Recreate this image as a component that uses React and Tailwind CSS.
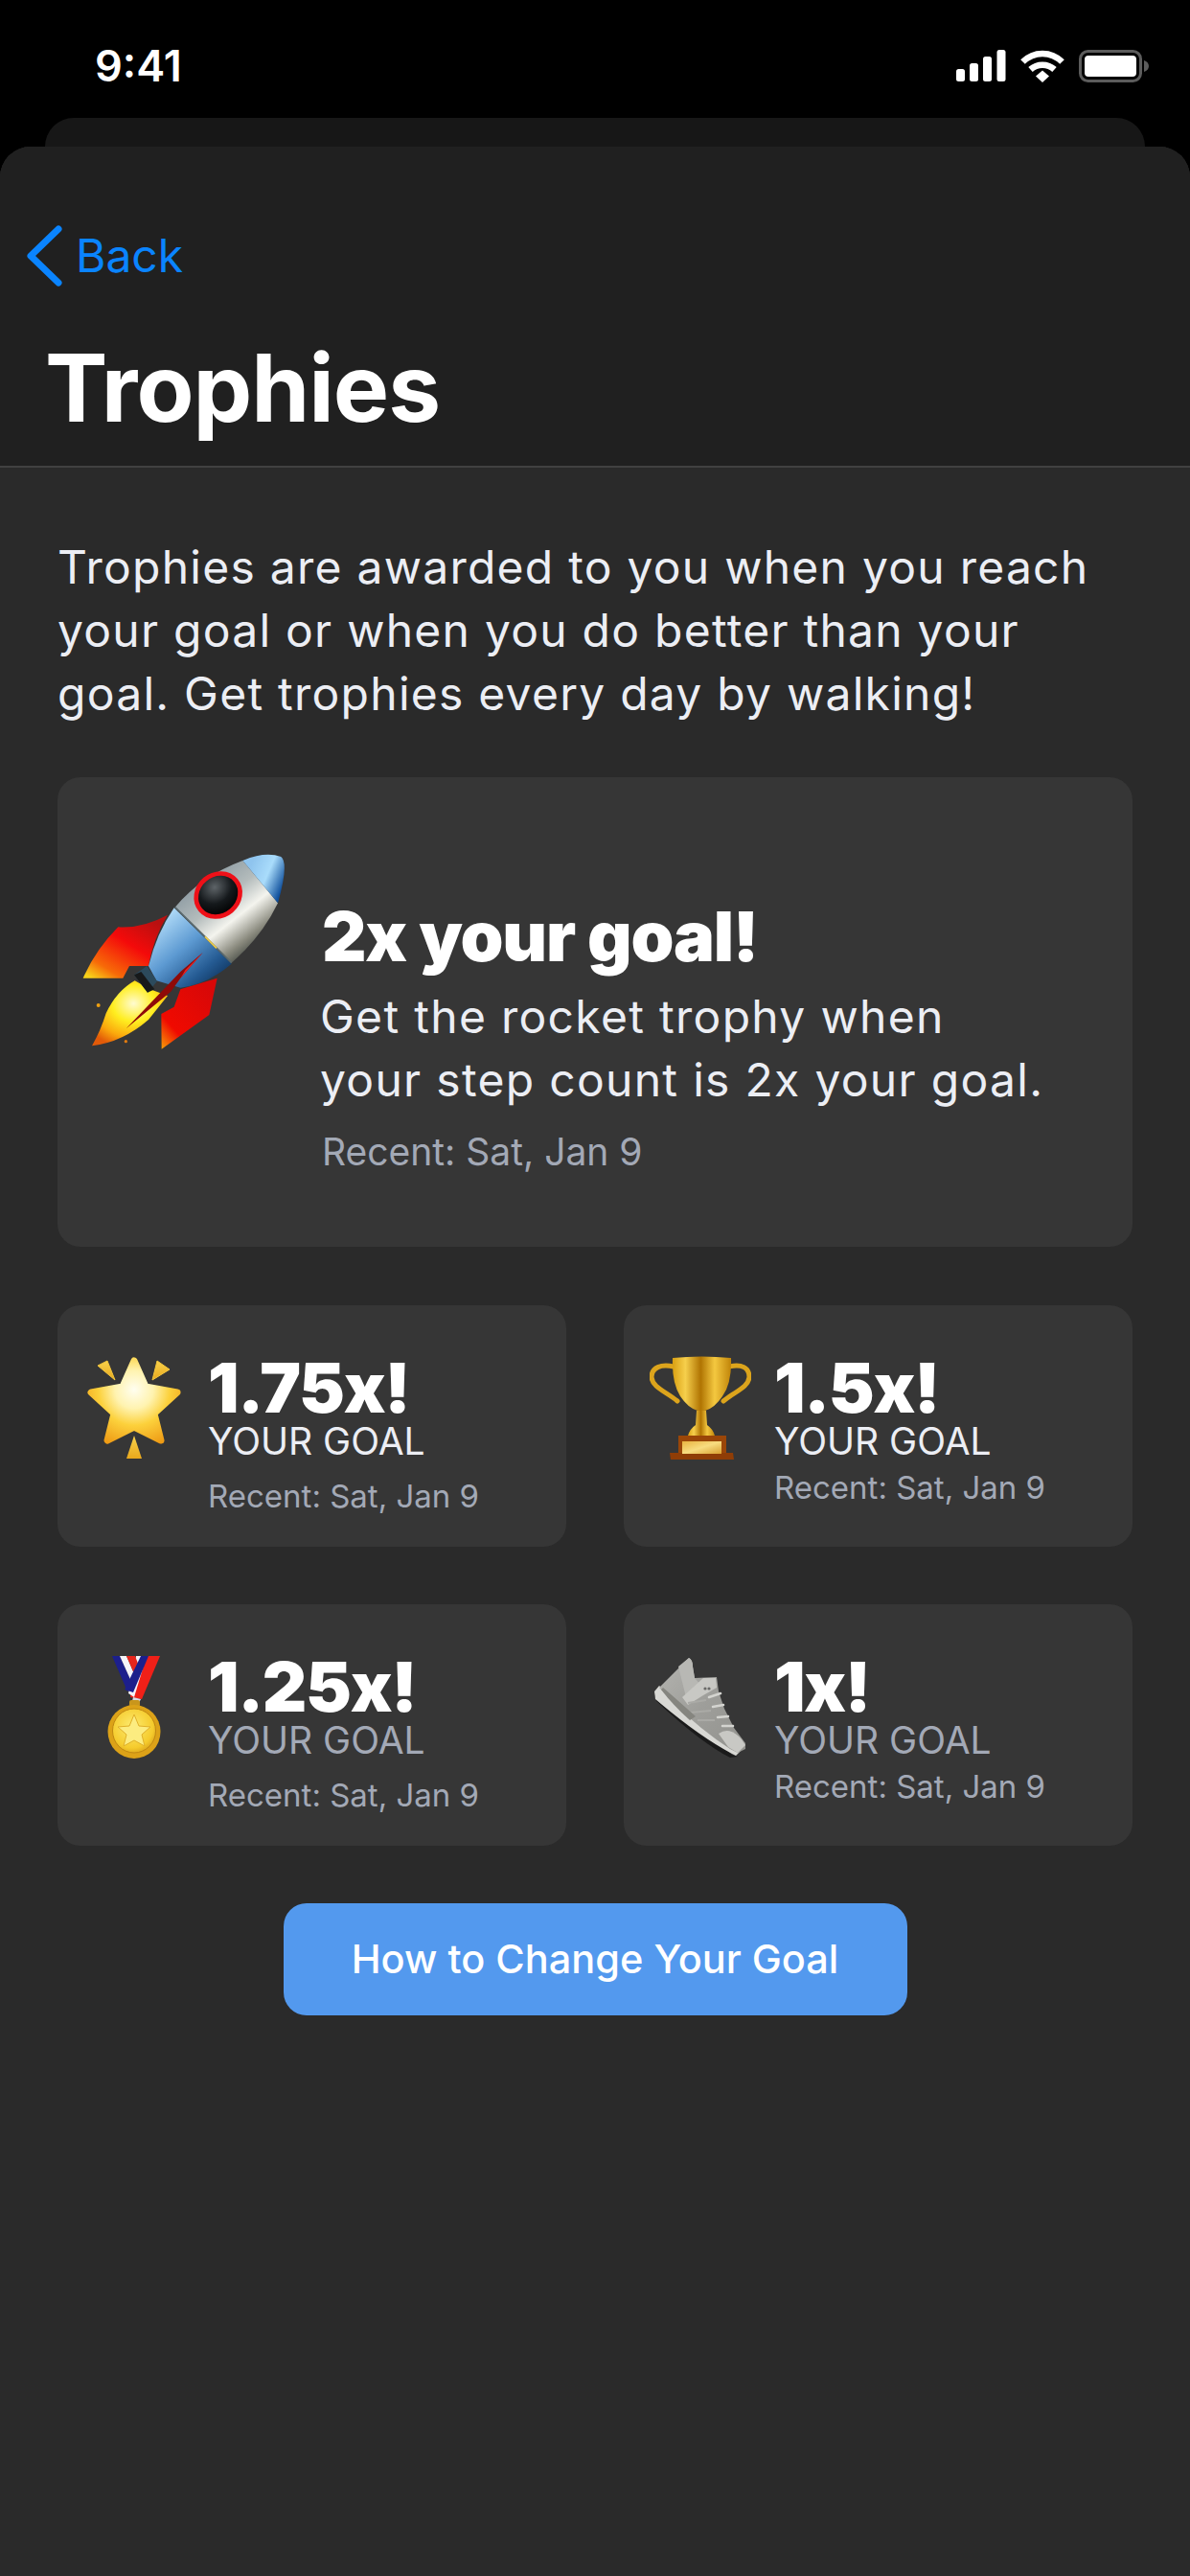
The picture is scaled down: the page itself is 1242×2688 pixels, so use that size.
const INTER = "font-['Inter','Noto_Sans',sans-serif]";

function SignalIcon() {
  return (
    <svg width="52" height="33" viewBox="0 0 52 33" fill="#fff">
      <rect x="0" y="20" width="9" height="13" rx="2.5" />
      <rect x="14" y="14" width="9" height="19" rx="2.5" />
      <rect x="28" y="7" width="9" height="26" rx="2.5" />
      <rect x="42.5" y="0" width="9" height="33" rx="2.5" />
    </svg>
  );
}

function WifiIcon() {
  return (
    <svg width="46" height="34" viewBox="0 0 46 34" fill="none" stroke="#fff" strokeWidth="6.5">
      <path d="M2.5 12.5C14 1 32 1 43.5 12.5" />
      <path d="M10.5 20.5C17.5 14 28.5 14 35.5 20.5" />
      <path d="M16 27.5L23 21.5L30 27.5L23 34Z" fill="#fff" stroke="none" />
    </svg>
  );
}

function BatteryIcon() {
  return (
    <svg width="74" height="34" viewBox="0 0 74 34">
      <rect x="1.5" y="1.5" width="63" height="31" rx="8" fill="none" stroke="#5c5c5c" strokeWidth="3" />
      <rect x="6" y="6" width="54" height="22" rx="4" fill="#fff" />
      <path d="M68 11C71 12 73 14 73 17C73 20 71 22 68 23Z" fill="#5c5c5c" />
    </svg>
  );
}

function BackChevron() {
  return (
    <svg width="38" height="64" viewBox="0 0 38 64" fill="none">
      <path d="M34 4L5 32L34 60" stroke="#0a84ff" strokeWidth="7" strokeLinecap="round" strokeLinejoin="round" />
    </svg>
  );
}

// coordinates in this one are taken from the 3x crop, hence the odd viewBox
function RocketEmoji() {
  return (
    <svg width="215" height="206" viewBox="75 268 645 618">
      <defs>
        <linearGradient id="rkNose" x1="0.2" y1="0.2" x2="1" y2="0.6">
          <stop offset="0" stopColor="#8fc4ee" />
          <stop offset="0.5" stopColor="#a9dcfb" />
          <stop offset="1" stopColor="#0f4f9c" />
        </linearGradient>
        <linearGradient id="rkBody" x1="0.25" y1="0.15" x2="0.8" y2="0.85">
          <stop offset="0" stopColor="#8c9aa2" />
          <stop offset="0.35" stopColor="#b4bcbc" />
          <stop offset="0.6" stopColor="#f4f4ee" />
          <stop offset="0.85" stopColor="#8a8a7e" />
          <stop offset="1" stopColor="#4a4f48" />
        </linearGradient>
        <linearGradient id="rkLower" x1="0.15" y1="0.1" x2="0.85" y2="0.9">
          <stop offset="0" stopColor="#b4defa" />
          <stop offset="0.45" stopColor="#5d9ad2" />
          <stop offset="0.8" stopColor="#245a92" />
          <stop offset="1" stopColor="#123a66" />
        </linearGradient>
        <linearGradient id="rkFinA" x1="0.85" y1="0.1" x2="0.1" y2="1">
          <stop offset="0" stopColor="#b81010" />
          <stop offset="0.4" stopColor="#f40a0a" />
          <stop offset="0.8" stopColor="#f76a08" />
          <stop offset="1" stopColor="#f7d21a" />
        </linearGradient>
        <linearGradient id="rkFinB" x1="0.8" y1="0.1" x2="0" y2="1">
          <stop offset="0" stopColor="#d80808" />
          <stop offset="0.7" stopColor="#f00a00" />
          <stop offset="1" stopColor="#f8a008" />
        </linearGradient>
        <radialGradient id="rkFlame" cx="0.55" cy="0.35" r="0.7">
          <stop offset="0" stopColor="#fffbd0" />
          <stop offset="0.4" stopColor="#ffee20" />
          <stop offset="0.75" stopColor="#fba80c" />
          <stop offset="1" stopColor="#e25a08" />
        </radialGradient>
        <radialGradient id="rkGlass" cx="0.55" cy="0.3" r="0.7">
          <stop offset="0" stopColor="#5e6468" />
          <stop offset="0.55" stopColor="#15191c" />
          <stop offset="1" stopColor="#000" />
        </radialGradient>
      </defs>
      <path d="M345 462Q265 505 190 500Q120 570 80 660L205 660L225 622L285 622Q300 535 345 462Z" fill="url(#rkFinA)" />
      <path d="M500 660L385 695L365 750L325 772L326 882L475 775Z" fill="url(#rkFinB)" />
      <path d="M242 668Q185 700 152 770Q135 825 108 872Q205 860 285 790L345 715L290 695Z" fill="url(#rkFlame)" />
      <circle cx="128" cy="745" r="6" fill="#f0a010" />
      <circle cx="214" cy="858" r="5" fill="#e07a10" />
      <path d="M365 440L545 615Q470 680 385 690L310 668L285 622Q310 520 365 440Z" fill="url(#rkLower)" />
      <path d="M240 650L280 622L312 670L282 705Z" fill="#2c4a5c" />
      <path d="M240 650L262 640L304 695L282 705Z" fill="#17191a" />
      <path d="M455 580L385 640L215 818L355 702L385 660Z" fill="#8f0a08" />
      <path d="M455 580L400 635L365 695L385 660Z" fill="#f02020" />
      <path d="M580 292L690 425Q640 530 545 612L368 438Q450 340 580 292Z" fill="url(#rkBody)" />
      <path d="M580 292Q650 262 700 280Q725 300 690 425Z" fill="url(#rkNose)" />
      <path d="M368 438L545 612" stroke="#5b6a6e" strokeWidth="5" fill="none" />
      <path d="M462 530L498 566" stroke="#e8c84a" strokeWidth="6" fill="none" />
      <ellipse cx="503" cy="400" rx="72" ry="64" transform="rotate(-40 503 400)" fill="url(#rkGlass)" stroke="#ee1018" strokeWidth="14" />
    </svg>
  );
}

function StarEmoji() {
  return (
    <svg width="98" height="106" viewBox="0 0 98 106">
      <defs>
        <radialGradient id="stFill" cx="49" cy="34" r="62" gradientUnits="userSpaceOnUse">
          <stop offset="0" stopColor="#fffef0" />
          <stop offset="0.32" stopColor="#fff3b0" />
          <stop offset="0.6" stopColor="#fcd13c" />
          <stop offset="1" stopColor="#ee9a14" />
        </radialGradient>
        <linearGradient id="stRay" x1="0" y1="0" x2="0" y2="1">
          <stop offset="0" stopColor="#f8d24c" />
          <stop offset="1" stopColor="#e9a81c" />
        </linearGradient>
      </defs>
      <path
        d="M49 4L61 31L94 37L70 59L77 87L49 73L21 87L28 59L4 37L37 31Z"
        fill="url(#stFill)"
        stroke="url(#stFill)"
        strokeWidth="7"
        strokeLinejoin="round"
      />
      <path d="M11 9L21 4L29 24Z" fill="url(#stRay)" stroke="#f3c63c" strokeWidth="1" strokeLinejoin="round" />
      <path d="M68 24L73 4L86 13Z" fill="url(#stRay)" stroke="#f3c63c" strokeWidth="1" strokeLinejoin="round" />
      <path d="M49 82L41 106L57 106Z" fill="url(#stRay)" />
    </svg>
  );
}

function TrophyEmoji() {
  return (
    <svg width="106" height="108" viewBox="0 0 106 108">
      <defs>
        <linearGradient id="trGold" x1="0" y1="0" x2="1" y2="0">
          <stop offset="0" stopColor="#d9a012" />
          <stop offset="0.22" stopColor="#f6cf4c" />
          <stop offset="0.48" stopColor="#b07402" />
          <stop offset="0.72" stopColor="#f4c840" />
          <stop offset="1" stopColor="#c08408" />
        </linearGradient>
        <linearGradient id="trPlate" x1="0" y1="0" x2="1" y2="1">
          <stop offset="0" stopColor="#e8b440" />
          <stop offset="0.5" stopColor="#f8dc80" />
          <stop offset="1" stopColor="#d8a030" />
        </linearGradient>
      </defs>
      <path d="M25 11C12 8 2 12 2 22C3 33 17 37 29 47" fill="none" stroke="#dca41c" strokeWidth="5" strokeLinecap="round" />
      <path d="M83 11C96 8 104 12 104 22C103 33 89 37 77 47" fill="none" stroke="#dca41c" strokeWidth="5" strokeLinecap="round" />
      <path d="M24 2Q54 -1 85 2Q86 28 76 42Q68 54 58 57L50 57Q40 54 32 42Q23 28 24 2Z" fill="url(#trGold)" />
      <path d="M49 57H59L60 72Q66 76 68 83H40Q42 76 48 72Z" fill="url(#trGold)" />
      <path d="M30 83H80V101H30Z" fill="#9a4608" />
      <path d="M21 101H87L88 108H22Z" fill="#8f3d06" />
      <rect x="34" y="89" width="41" height="13" fill="url(#trPlate)" />
    </svg>
  );
}

function MedalEmoji() {
  return (
    <svg width="56" height="108" viewBox="0 0 56 108">
      <defs>
        <radialGradient id="mdFace" cx="0.45" cy="0.4" r="0.7">
          <stop offset="0" stopColor="#fdeb70" />
          <stop offset="0.7" stopColor="#f5cb2c" />
          <stop offset="1" stopColor="#d09414" />
        </radialGradient>
      </defs>
      <path d="M30 1L55 1L36 46L24 44Z" fill="#f02018" />
      <path d="M30 1L41 1L28 44L22 40Z" fill="#f4f4fa" />
      <path d="M5 1L13 1L27 32L21 38Z" fill="#1c1f8c" />
      <path d="M13 1L20 1L30 24L27 32Z" fill="#f4f4fa" />
      <path d="M20 1L29 1L34 14L30 24Z" fill="#e8261c" />
      <path d="M35 1L43 1L27 39L18 36Z" fill="#1c1f8c" />
      <path d="M27 44L35 46L32 52L25 52Z" fill="#dcdce6" />
      <rect x="23" y="47" width="11" height="7" rx="2" fill="#c9961c" />
      <ellipse cx="28" cy="80" rx="27.5" ry="28" fill="#dca218" />
      <ellipse cx="28" cy="79" rx="22.5" ry="23" fill="url(#mdFace)" stroke="#c08812" strokeWidth="1" />
      <path d="M28 62L33 74L45 75L36 83L39 95L28 89L17 95L20 83L11 75L23 74Z" fill="#fcec80" stroke="#e0b028" strokeWidth="1" strokeLinejoin="round" />
    </svg>
  );
}

function ShoeEmoji() {
  return (
    <svg width="98" height="105" viewBox="0 0 98 105">
      <defs>
        <linearGradient id="shUpper" x1="0" y1="0" x2="1" y2="1">
          <stop offset="0" stopColor="#b4b4b0" />
          <stop offset="0.5" stopColor="#9e9e9a" />
          <stop offset="1" stopColor="#92928e" />
        </linearGradient>
      </defs>
      <path d="M1 40L4 34L82 102L88 104L80 105Q50 90 3 46Z" fill="#1a1a1a" />
      <path d="M1 36L6 30L84 95L92 97L86 103Q50 85 2 44Z" fill="#d8d8d4" />
      <path d="M6 32L37 1Q41 3 41 10L43 22L66 21L68 36L74 54L84 74L96 90L96 96L88 100L80 96Q40 70 6 32Z" fill="url(#shUpper)" />
      <path d="M26 10L37 1Q41 3 41 10L43 22L50 30L34 42Z" fill="#b8b8b4" />
      <path d="M30 42L52 22L65 22L66 32L52 40L36 50Z" fill="#c8c8c4" />
      <circle cx="54" cy="33" r="1.6" fill="#6a6a68" />
      <circle cx="58" cy="33" r="1.6" fill="#6a6a68" />
      <path d="M58 42L70 38M62 52L73 50M67 63L78 62M72 72L83 72" stroke="#d4d4d0" strokeWidth="2.5" strokeLinecap="round" fill="none" />
      <path d="M36 48L55 45M38 58L60 56M46 66L64 66" stroke="#aaaaa6" strokeWidth="2" fill="none" />
      <path d="M68 80Q80 72 92 86L96 92L88 100L78 94Z" fill="#c8c8c4" />
      <path d="M10 32Q24 44 44 62L38 66Q20 50 8 34Z" fill="#85857f" />
    </svg>
  );
}

function TrophyCard({ Emoji, multiple, goalClass, recentGap }) {
  return (
    <div className="h-[252px] rounded-[24px] bg-[#363636] relative pl-[157px]">
      <div className="absolute left-[15px] top-[52px] w-[130px] h-[110px] flex justify-center items-center">
        <Emoji />
      </div>
      <div className="pt-[52px] text-[72px] leading-[68px] font-black tracking-[-1.3px] text-white">{multiple}</div>
      <div className={`text-[39px] leading-[44px] ${goalClass}`}>YOUR GOAL</div>
      <div className={`text-[33px] leading-[40px] text-[#a3a9b6] ${recentGap}`}>Recent: Sat, Jan 9</div>
    </div>
  );
}

export default function App() {
  return (
    <div className={`w-[1242px] h-[2688px] bg-black flex flex-col overflow-hidden ${INTER}`}>
      {/* status bar */}
      <div className="h-[123px] shrink-0 flex justify-between pl-[99px] pr-[42px] pt-[42px]">
        <span className="text-[45px] leading-[53px] font-semibold text-white">9:41</span>
        <div className="flex items-start gap-[15px] pt-[10px]">
          <SignalIcon />
          <WifiIcon />
          <BatteryIcon />
        </div>
      </div>

      {/* card peeking out behind the sheet */}
      <div className="h-[30px] shrink-0 mx-[47px] rounded-t-[32px] bg-[#171717]" />

      <div className="flex-1 rounded-t-[32px] bg-[#2a2a2a] overflow-hidden flex flex-col">
        <header className="h-[335px] shrink-0 bg-[#202020] border-b-2 border-[#414141] pl-[27px]">
          <div className="flex items-center gap-[14px] pt-[82px]">
            <BackChevron />
            <span className="text-[48px] leading-[64px] text-[#0a84ff]">Back</span>
          </div>
          <h1 className="pl-[20px] pt-[46px] text-[98px] leading-[120px] font-bold tracking-[-1px] text-white">Trophies</h1>
        </header>

        <main className="px-[60px] pt-[71px]">
          <p className="text-[48px] leading-[66px] tracking-[1.25px] text-[#eceef4] w-[1100px]">
            Trophies are awarded to you when you reach your goal or when you do better than your goal. Get trophies every day by walking!
          </p>

          <section className="mt-[54px] h-[490px] rounded-[24px] bg-[#363636] relative pl-[276px] pt-[124px]">
            <div className="absolute left-[25px] top-[79px]">
              <RocketEmoji />
            </div>
            <div className="text-[72px] leading-[84px] font-black tracking-[-1.2px] text-white">2x your goal!</div>
            <p className="text-[48px] leading-[66px] tracking-[1.3px] text-[#eceef4] -ml-[2px] mt-[9px] whitespace-pre-line">
              {'Get the rocket trophy when\nyour step count is 2x your goal.'}
            </p>
            <div className="mt-[19px] text-[39px] leading-[46px] text-[#a3a9b6]">Recent: Sat, Jan 9</div>
          </section>

          <div className="mt-[61px] grid grid-cols-2 gap-x-[60px] gap-y-[60px]">
            <TrophyCard Emoji={StarEmoji} multiple="1.75x!" goalClass="text-[#eceef4]" recentGap="mt-[15px]" />
            <TrophyCard Emoji={TrophyEmoji} multiple="1.5x!" goalClass="text-[#eceef4]" recentGap="mt-[6px]" />
            <TrophyCard Emoji={MedalEmoji} multiple="1.25x!" goalClass="text-[#a3a9b6]" recentGap="mt-[15px]" />
            <TrophyCard Emoji={ShoeEmoji} multiple="1x!" goalClass="text-[#a3a9b6]" recentGap="mt-[6px]" />
          </div>

          <button className="block mx-auto mt-[60px] w-[651px] h-[117px] rounded-[24px] bg-[#5399ee] text-[41.5px] font-medium text-white">
            How to Change Your Goal
          </button>
        </main>
      </div>
    </div>
  );
}
